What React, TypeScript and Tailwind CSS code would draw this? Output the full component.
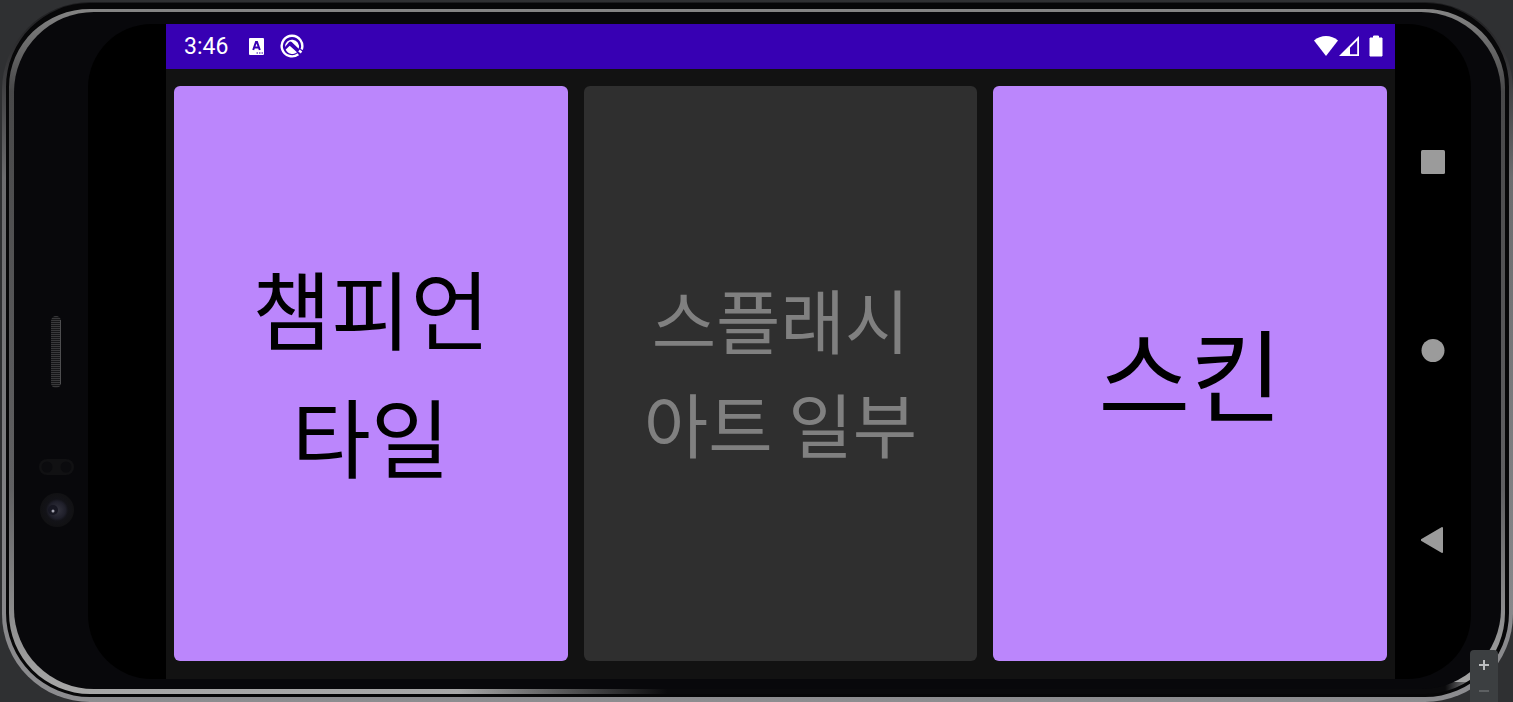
import type { ReactNode } from 'react';

type ChoiceProps = { children: ReactNode; size: string; disabled?: boolean };

function Choice({ children, size, disabled = false }: ChoiceProps) {
  return (
    <button
      type="button"
      disabled={disabled}
      className={`flex min-w-0 flex-1 items-center justify-center rounded-md bg-[#bb86fc] px-8 pb-1.5 text-center break-keep text-black disabled:bg-[#2f2f2f] disabled:text-[#808080] ${size}`}
    >
      {children}
    </button>
  );
}

function StatusBar() {
  return (
    <header className="flex h-[45px] shrink-0 items-center bg-[#3700b3] pr-3 pb-px pl-[18px] text-white">
      <time className="pt-0.5 font-[Roboto,sans-serif] text-[23px] leading-7">3:46</time>
      <svg className="ml-[18px] h-6 w-5" viewBox="0 0 20 24" aria-hidden="true">
        <rect x="3" y="4" width="15" height="17" rx="1" fill="#fff" />
        <path d="M7.200 16 10 8h1l2.800 8M8.300 13.400h4.500" fill="none" stroke="#3700b3" strokeWidth="2" />
        <path d="M10.500 19H12M13 19h1.500M15.500 19H17" stroke="#3700b3" strokeWidth="1.200" />
      </svg>
      <svg className="ml-3.5 size-6" viewBox="0 0 24 24" aria-hidden="true">
        <path d="M18.300 20.200A10.300 10.300 0 1 1 21.700 15.500" fill="none" stroke="#fff" strokeWidth="2.400" />
        <path d="M5 13a7 7 0 1 1 13.700 1.700l-7-6.700a2 2 0 0 0-2.800.2z" fill="#fff" />
        <path d="M5.700 15.500 9.700 11.700 17 18.300A7.200 7.200 0 0 1 5.700 15.500z" fill="#fff" />
        <path d="m19 16.500 2.500 2" stroke="#fff" strokeWidth="2.400" />
      </svg>
      <div className="ml-auto flex items-center">
        <svg className="h-6 w-[26px]" viewBox="0 0 26 24" aria-hidden="true">
          <path d="M1 6.500C7.500.500 18.500.500 25 6.500L13 22z" fill="#fff" />
        </svg>
        <svg className="h-6 w-5" viewBox="0 0 20 24" aria-hidden="true">
          <path d="M0 22 20 2v20zM11 20.200h7.200V6.500L11 13.800z" fill="#fff" fillRule="evenodd" />
        </svg>
        <svg className="ml-2.5 h-6 w-[14px]" viewBox="0 0 14 24" aria-hidden="true">
          <path d="M4.500 2h5v2H13v18H1V4h3.500z" fill="#fff" stroke="#fff" strokeWidth="1" strokeLinejoin="round" />
        </svg>
      </div>
    </header>
  );
}

function Sensors() {
  return (
    <svg className="h-40 w-10" viewBox="0 0 40 160" aria-hidden="true">
      <defs>
        <pattern id="mesh" width="10" height="2" patternUnits="userSpaceOnUse">
          <rect width="10" height="1" fill="#39393b" />
          <rect y="1" width="10" height="1" fill="#161618" />
        </pattern>
      </defs>
      <rect x="15" width="10" height="72" rx="5" fill="url(#mesh)" />
      <path d="M24.500 4v64" stroke="#4d4d4f" />
      <rect x="3" y="143" width="35" height="16" rx="8" fill="#111113" />
      <circle cx="11" cy="151" r="5.500" fill="#0b0b0e" />
      <circle cx="30" cy="151" r="5.500" fill="#0b0b0e" />
    </svg>
  );
}

function Lens() {
  return (
    <svg className="size-10" viewBox="0 0 40 40" aria-hidden="true">
      <defs>
        <radialGradient id="lens">
          <stop offset="0" stopColor="#34343f" />
          <stop offset="0.500" stopColor="#1f1f2a" />
          <stop offset="0.650" stopColor="#131318" />
          <stop offset="1" stopColor="#111113" />
        </radialGradient>
      </defs>
      <circle cx="21" cy="20" r="17" fill="url(#lens)" />
      <circle cx="17" cy="20" r="5" fill="#171722" />
      <circle cx="17" cy="21" r="1.500" fill="#a5a5b2" />
    </svg>
  );
}

function NavButtons() {
  return (
    <nav className="flex w-[76px] shrink-0 flex-col items-center justify-around rounded-r-[64px] bg-black py-11 text-[#9b9b9b]">
      <button type="button" aria-label="Overview">
        <svg className="size-6" viewBox="0 0 24 24"><rect width="24" height="24" rx="1.500" fill="currentColor" /></svg>
      </button>
      <button type="button" aria-label="Home">
        <svg className="size-6" viewBox="0 0 24 24"><circle cx="12" cy="12.500" r="11.500" fill="currentColor" /></svg>
      </button>
      <button type="button" aria-label="Back">
        <svg className="h-[26px] w-6" viewBox="0 0 24 26">
          <path d="M0 12.200 20.500.200a1 1 0 0 1 1.500 1v23.600a1 1 0 0 1-1.500 1L0 13.800a1 1 0 0 1 0-1.600z" fill="currentColor" />
        </svg>
      </button>
    </nav>
  );
}

export default function App() {
  return (
    <div className="relative flex h-screen overflow-hidden bg-[#2f3032] pt-0.5 pl-0.5 font-['Noto_Sans_CJK_KR',sans-serif]">
      <div className="flex flex-1 rounded-[88px] bg-linear-to-b from-[#1c1c1e] via-[#6c6c6e] via-25% to-[#8d8d90] pt-px pr-1 pb-[5px] pl-1">
        <div className="flex flex-1 rounded-[84px] border-t-[6px] border-r-4 border-b-[3px] border-l-[3px] border-[#070708] bg-[linear-gradient(to_right,transparent_30%,#0a0a0c_44%,#0a0a0c_96%,transparent_98%),linear-gradient(to_bottom,#858585,#484849_12%,#606062_70%,#a8a8a8)] bg-[size:100%_12px,100%_100%] bg-[position:bottom,center] bg-no-repeat pt-[3px] pr-1 pb-[5px] pl-[5px]">
          <div className="flex flex-1 rounded-[80px] bg-[#08080b] pt-3 pr-[30px] pb-2.5">
            <div className="flex w-[74px] shrink-0 flex-col items-end justify-end gap-[14px] pr-3 pb-[149px]">
              <Sensors />
              <Lens />
            </div>
            <div className="w-[78px] shrink-0 rounded-l-[64px] bg-black" />
            <div className="flex min-w-0 flex-1 flex-col bg-[#121212]">
              <StatusBar />
              <main className="flex flex-1 gap-4 px-2 pt-[17px] pb-[18px]">
                <Choice size="text-[86px] leading-[128px]">챔피언<br />타일</Choice>
                <Choice size="text-[70px] leading-[104px]" disabled>스플래시<br />아트 일부</Choice>
                <Choice size="text-[100px] leading-[150px]">스킨</Choice>
              </main>
            </div>
            <NavButtons />
          </div>
        </div>
      </div>
      <div className="absolute right-[15px] bottom-0 flex h-[52px] w-7 flex-col items-center rounded-t bg-[#3c3f41]">
        <button type="button" aria-label="Zoom in" className="flex h-[30px] items-center text-[#bbbdbf]">
          <svg className="size-3" viewBox="0 0 12 12"><path d="M6 1v10M1 6h10" stroke="currentColor" strokeWidth="2" /></svg>
        </button>
        <button type="button" aria-label="Zoom out" disabled className="flex h-[22px] items-center text-[#5d6062]">
          <svg className="size-3" viewBox="0 0 12 12"><path d="M1 6h10" stroke="currentColor" strokeWidth="2" /></svg>
        </button>
      </div>
    </div>
  );
}
